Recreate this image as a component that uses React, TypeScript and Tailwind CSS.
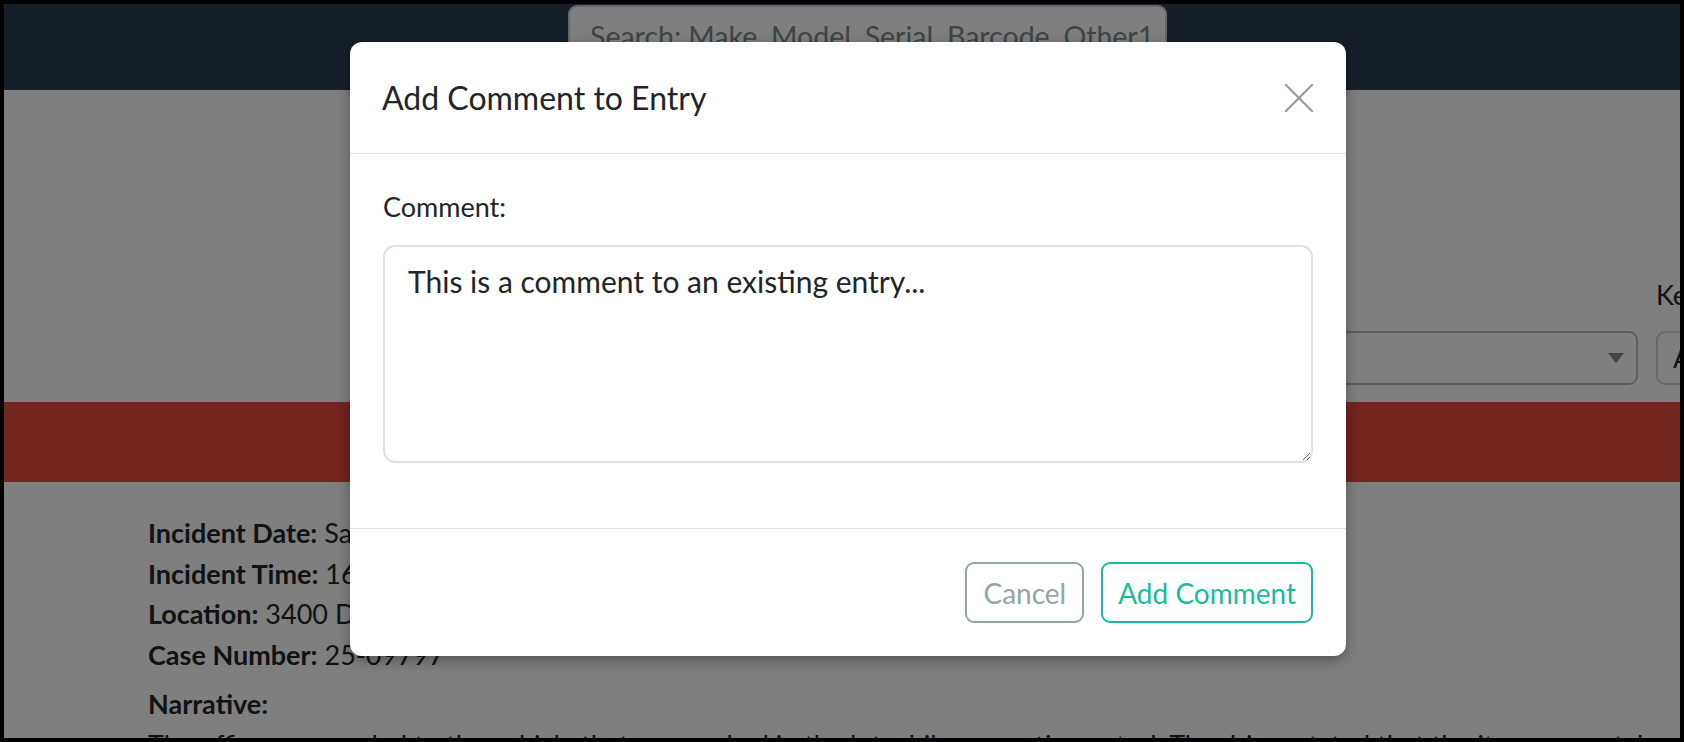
const lines = [
  { label: "Incident Date:", value: "Saturday, September 13, 2025" },
  { label: "Incident Time:", value: "16:42" },
  { label: "Location:", value: "3400 Dorchester Ave, Parking Lot B" },
  { label: "Case Number:", value: "25-09797" },
];

export default function App() {
  return (
    <div className="relative h-[742px] w-[1684px] overflow-hidden border-4 border-black bg-white font-[Lato,sans-serif] text-[#212529]">
      {/* navbar */}
      <div className="flex h-[86px] bg-[#2c3e50] pl-[564px] pt-[1px]">
        <div className="flex h-[62px] w-[599px] items-center overflow-hidden whitespace-nowrap rounded-[9px] border-2 border-[#ced4da] bg-white px-[20px] text-[28.5px] text-[#7b8a8b]">
          Search: Make, Model, Serial, Barcode, Other1
        </div>
      </div>

      {/* filters */}
      <div className="flex gap-[18px] pl-[894px] pt-[185px]">
        <div className="w-[740px] shrink-0">
          <div className="mb-[16px] text-[27px] leading-[40px]">Status</div>
          <div className="flex h-[54px] items-center justify-end rounded-[9px] border-2 border-[#bdbdbd] pr-[12px]">
            <svg width="16" height="10" viewBox="0 0 16 10">
              <path d="M0 0 L16 0 L8 10 Z" fill="#8a8a8a" />
            </svg>
          </div>
        </div>
        <div className="w-[300px] shrink-0">
          <div className="mb-[16px] text-[27px] leading-[40px]">Keyword</div>
          <div className="flex h-[54px] items-center rounded-[9px] border-2 border-[#ced4da] px-[15px] text-[27px]">
            All
          </div>
        </div>
      </div>

      {/* alert bar */}
      <div className="mt-[17px] h-[80px] bg-[#e74c3c]" />

      {/* details */}
      <div className="pl-[144px] pt-[31px] text-[27px] leading-[40.5px]">
        {lines.map((l) => (
          <div key={l.label}>
            <span className="font-bold">{l.label}</span> {l.value}
          </div>
        ))}
        <div className="mt-[9px] font-bold">Narrative:</div>
        <div className="whitespace-nowrap">
          The officer responded to the vehicle that was parked in the lot while on routine patrol. The driver stated that the items were taken.
        </div>
      </div>

      {/* backdrop */}
      <div className="absolute inset-0 bg-black/50" />

      {/* modal */}
      <div className="absolute left-[346px] top-[38px] w-[996px] rounded-[12px] bg-white shadow-[0_4px_14px_rgba(0,0,0,0.35)]">
        <div className="flex h-[112px] items-center justify-between border-b border-[#dee2e6] pl-[32px] pr-[33px]">
          <div className="text-[32px] leading-[46px]">Add Comment to Entry</div>
          <svg width="28" height="28" viewBox="0 0 28 28" className="text-[#9a9a9a]">
            <path d="M1 1 L27 27 M27 1 L1 27" stroke="currentColor" strokeWidth="2.2" strokeLinecap="round" />
          </svg>
        </div>
        <div className="px-[33px] pb-[33px] pt-[33px]">
          <div className="mb-[18px] text-[27px] leading-[40px]">Comment:</div>
          <textarea
            className="mb-[32px] block h-[218px] w-full rounded-[12px] border-2 border-[#dee2e6] px-[23px] py-[12px] text-[30px] leading-[45px] text-[#212529] outline-none"
            defaultValue="This is a comment to an existing entry..."
          />
        </div>
        <div className="flex justify-end gap-[17px] border-t border-[#dee2e6] px-[33px] py-[33px]">
          <button className="h-[61px] rounded-[9px] border-2 border-[#95a5a6] px-[16px] text-[28px] text-[#95a5a6]">
            Cancel
          </button>
          <button className="h-[61px] rounded-[9px] border-2 border-[#18bc9c] px-[15px] text-[28px] text-[#18bc9c]">
            Add Comment
          </button>
        </div>
      </div>
    </div>
  );
}
